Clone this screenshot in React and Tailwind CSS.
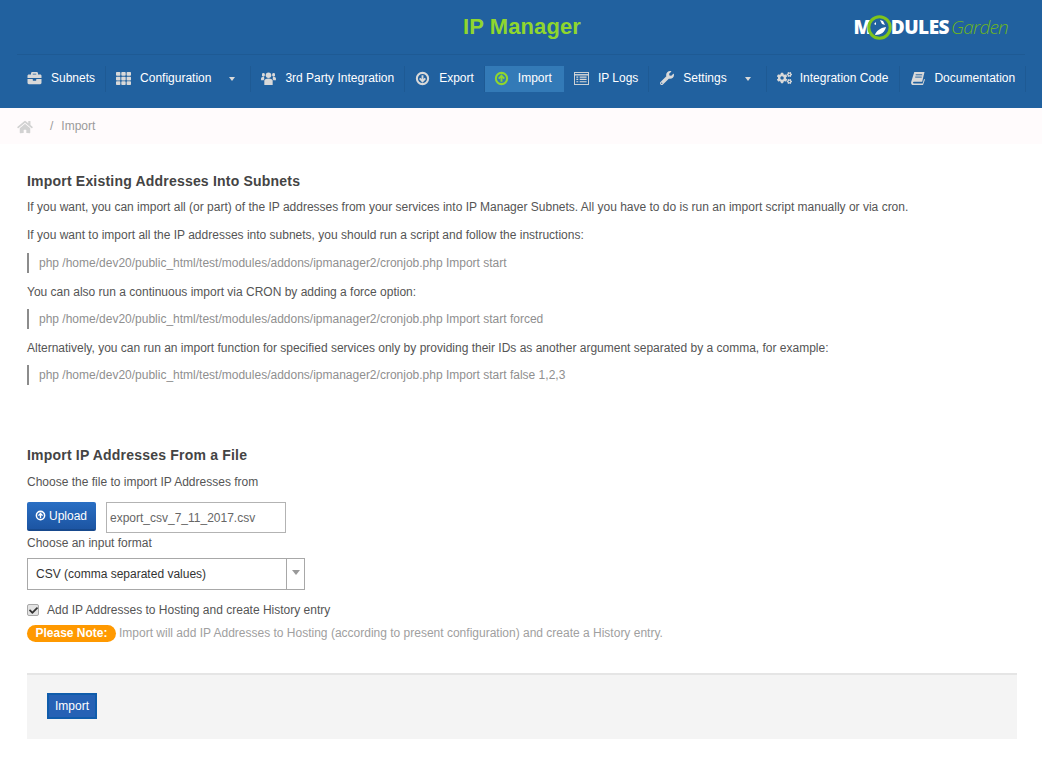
import React from "react";
import { FaBriefcase, FaTh, FaHome, FaWrench, FaCogs, FaCheck } from "react-icons/fa";

const CircleArrow = ({ down, className }) => (
  <svg viewBox="0 0 16 16" className={className} fill="none">
    <circle cx="8" cy="8" r="6" stroke="currentColor" strokeWidth="2.2" />
    <path
      d={down ? "M8 4.5v6M5 7.8 8 11l3-3.2" : "M8 11.5v-6M5 8.2 8 5l3 3.2"}
      stroke="currentColor"
      strokeWidth="2"
    />
  </svg>
);

const ListIcon = ({ className }) => (
  <svg viewBox="0 0 16 14" className={className} fill="none" stroke="currentColor">
    <rect x="0.5" y="0.5" width="15" height="13" />
    <path d="M0 3h16" strokeWidth="1.5" />
    <path d="M2.5 5.5h2M6 5.5h7.5M2.5 8h2M6 8h7.5M2.5 10.5h2M6 10.5h7.5" strokeWidth="1.2" />
  </svg>
);

const GroupIcon = ({ className }) => (
  <svg viewBox="0 0 16 14" className={className} fill="currentColor">
    <circle cx="8" cy="3.5" r="3" />
    <path d="M3.5 14V9.5C3.5 8 5 7 8 7s4.500 1 4.500 2.500V14z" />
    <rect x="1" y="1" width="3" height="4" rx="1.400" />
    <rect x="12" y="1" width="3" height="4" rx="1.400" />
    <path d="M0 9V7c0-1 1-1.500 3.200-1.500L3.500 7 2.800 9zM16 9V7c0-1-1-1.500-3.200-1.500L12.500 7l.7 2z" />
  </svg>
);

const BookIcon = ({ className }) => (
  <svg viewBox="0 0 15 14" className={className} fill="currentColor">
    <path d="M3.500 0H14.500L12 10.500H3C2 10.500 1.800 12.300 3 12.300H12.500L14 7.500 15 8 12.900 14H2.500C.6 14-.3 12.300.2 10.500z" />
    <path d="M5 3h7M4.500 5.500h7" stroke="#21619f" strokeWidth="1" />
  </svg>
);

const navItems = [
  { label: "Subnets", icon: <FaBriefcase className="w-[15px] h-[14px]" />, box: "pl-[10px] pr-[10px]", gap: "mr-[9px]" },
  { label: "Configuration", icon: <FaTh className="w-[15px] h-[15px]" />, caret: true, box: "pl-[10px] pr-[10px]", gap: "mr-[9px]" },
  { label: "3rd Party Integration", icon: <GroupIcon className="w-[15px] h-[13px]" />, box: "pl-[10px] pr-[10px]", gap: "mr-[9px]" },
  { label: "Export", icon: <CircleArrow down className="w-[15px] h-[15px]" />, box: "pl-[10px] pr-[10px]", gap: "mr-[9px]" },
  { label: "Import", icon: <CircleArrow className="w-[15px] h-[15px] text-[#8fd62e]" />, active: true, box: "pl-[9px] pr-[12px]", gap: "mr-[9px]" },
  { label: "IP Logs", icon: <ListIcon className="w-[15px] h-[13px]" />, box: "pl-[10px] pr-[10px]", gap: "mr-[9px]" },
  { label: "Settings", icon: <FaWrench className="w-[14px] h-[14px]" />, caret: true, box: "pl-[10px] pr-[10px]", gap: "mr-[9px]" },
  { label: "Integration Code", icon: <FaCogs className="w-[16px] h-[14px]" />, box: "pl-[10px] pr-[11px]", gap: "mr-[8px]" },
  { label: "Documentation", icon: <BookIcon className="w-[14px] h-[13px]" />, box: "pl-[10px] pr-[10px]", gap: "mr-[9px]" },
];

const Logo = () => (
  <div className="flex items-center h-[26px] text-white font-['Open_Sans',sans-serif]">
    <span className="text-[19px] font-extrabold leading-none">M</span>
    <svg viewBox="0 0 25 25" className="w-[25px] h-[25px] -ml-[5px] -mr-[1px] shrink-0">
      <circle cx="12.500" cy="12.500" r="10.700" fill="#21619f" stroke="#7fc41c" strokeWidth="3" />
      <path d="M8 20c1-4 5-7 11-8-1 5-5 8-11 8z" fill="#fff" />
      <path d="M13 5l3 1 2 4-3-1zM7 9l2-2v3z" fill="#fff" />
    </svg>
    <span className="text-[19px] font-extrabold leading-none tracking-[-0.5px]">DULES</span>
    <span className="ml-[2px] text-[19px] font-light italic leading-none text-[#6cb51d] tracking-[-0.8px]">Garden</span>
  </div>
);

const Command = ({ children }) => (
  <div className="mb-[10px] h-[20px] border-l-2 border-[#8c8c8c] pl-[10px] text-[#8f8f8f] leading-[20px]">
    {children}
  </div>
);

export default function App() {
  return (
    <div className="w-[1042px] h-[758px] bg-white text-[12px] text-[#555] font-['Liberation_Sans',Arial,sans-serif] overflow-hidden">
      <header className="h-[108px] bg-[#21619f] px-[17px]">
        <div className="relative h-[55px] border-b border-[#1e5a94] flex items-center justify-end pr-[17px]">
          <h1 className="absolute left-[2px] right-0 top-[13px] text-center text-[22px] leading-[28px] font-bold tracking-[0.1px] text-[#8fd62e]">
            IP Manager
          </h1>
          <Logo />
        </div>
        <nav className="flex items-start pt-[11px]">
          {navItems.map((item) => (
            <div
              key={item.label}
              className={`flex items-center h-[26px] pb-[2px] ${item.box} ${
                item.active ? "bg-[#337ab7]" : "border-r border-[#1e5a94]"
              }`}
            >
              <span className={`w-[15px] flex justify-center text-[#d9d9d9] ${item.gap}`}>{item.icon}</span>
              <span className="text-white whitespace-nowrap">{item.label}</span>
              {item.caret && (
                <span className="ml-[18px] mr-[5px] mt-[2px] w-0 h-0 border-x-[3.5px] border-x-transparent border-t-[4px] border-t-[#d9d9d9]" />
              )}
            </div>
          ))}
        </nav>
      </header>

      <div className="h-[36px] bg-[#fffbfc] px-[17px] flex items-center text-[#9a9a9a]">
        <FaHome className="w-[16px] h-[14px] text-[#d2d2d2] mt-[2px]" />
        <span className="ml-[17px]">/</span>
        <span className="ml-[8px]">Import</span>
      </div>

      <main className="px-[27px] pt-[28px]">
        <h2 className="text-[14px] leading-[18px] font-bold tracking-[0.2px] text-[#444] mb-[8px]">
          Import Existing Addresses Into Subnets
        </h2>
        <p className="leading-[18px] mb-[10px]">
          If you want, you can import all (or part) of the IP addresses from your services into IP Manager Subnets. All you have to do is run an import script manually or via cron.
        </p>
        <p className="leading-[18px] mb-[9px]">
          If you want to import all the IP addresses into subnets, you should run a script and follow the instructions:
        </p>
        <Command>php /home/dev20/public_html/test/modules/addons/ipmanager2/cronjob.php Import start</Command>
        <p className="leading-[18px] mb-[8px]">You can also run a continuous import via CRON by adding a force option:</p>
        <Command>php /home/dev20/public_html/test/modules/addons/ipmanager2/cronjob.php Import start forced</Command>
        <p className="leading-[18px] mb-[8px]">
          Alternatively, you can run an import function for specified services only by providing their IDs as another argument separated by a comma, for example:
        </p>
        <Command>php /home/dev20/public_html/test/modules/addons/ipmanager2/cronjob.php Import start false 1,2,3</Command>

        <h2 className="mt-[61px] text-[14px] leading-[18px] font-bold tracking-[0.2px] text-[#444] mb-[9px]">
          Import IP Addresses From a File
        </h2>
        <p className="leading-[18px] mb-[11px]">Choose the file to import IP Addresses from</p>
        <div className="flex items-start gap-[10px]">
          <button className="w-[69px] h-[29px] rounded-[2px] bg-gradient-to-b from-[#2a6fc4] to-[#1c55a3] border-b-2 border-[#17498d] text-white flex items-center justify-center gap-[3px]">
            <CircleArrow className="w-[11px] h-[11px] -ml-[1px]" />
            Upload
          </button>
          <div className="w-[180px] h-[31px] border border-[#b3b3b3] pl-[3px] flex items-center text-[#666]">
            export_csv_7_11_2017.csv
          </div>
        </div>
        <p className="leading-[18px] mt-[1px] mb-[6px]">Choose an input format</p>
        <div className="w-[278px] h-[32px] border border-[#a8a8a8] flex items-stretch">
          <div className="flex-1 pl-[8px] flex items-center text-[#333]">CSV (comma separated values)</div>
          <div className="w-[18px] border-l border-[#a8a8a8] flex justify-center pt-[11px]">
            <span className="w-0 h-0 border-x-[4px] border-x-transparent border-t-[5px] border-t-[#999]" />
          </div>
        </div>
        <div className="flex items-center mt-[11px] h-[18px]">
          <span className="w-[12px] h-[12px] rounded-[2px] bg-[#e3e3e3] border border-[#a8a8a8] flex items-center justify-center text-[#333]">
            <FaCheck className="w-[9px] h-[9px]" />
          </span>
          <span className="ml-[8px]">Add IP Addresses to Hosting and create History entry</span>
        </div>
        <div className="flex items-center mt-[5px] h-[18px]">
          <span className="w-[89px] h-[17px] rounded-full bg-[#ff9900] text-white font-bold flex items-center justify-center">
            Please Note:
          </span>
          <span className="ml-[3px] text-[#a0a0a0]">
            Import will add IP Addresses to Hosting (according to present configuration) and create a History entry.
          </span>
        </div>

        <div className="mt-[31px] w-[990px] h-[66px] bg-[#f4f4f4] border-t-2 border-[#e5e5e5] pl-[20px] pt-[18px]">
          <button className="w-[50px] h-[26px] bg-[#2561b5] border-2 border-[#0f5cab] text-white flex items-center justify-center">
            Import
          </button>
        </div>
      </main>
    </div>
  );
}
